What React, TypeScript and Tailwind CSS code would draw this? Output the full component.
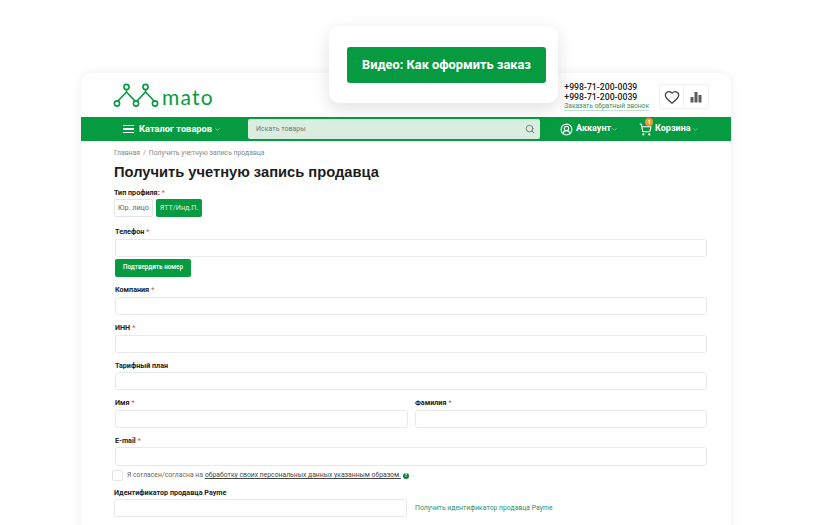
import { ChevronDown, Search, CircleUserRound, ShoppingCart, Heart } from 'lucide-react'

function Logo() {
  return (
    <svg width="46" height="26" viewBox="0 0 46 26" fill="none" stroke="#079b41" strokeWidth="1.6">
      <path d="M13.5 7 V10 L4 20 M13.5 10 L23 20 L32.5 10 L42 20 M32.5 7 V10" />
      <circle cx="13.5" cy="5" r="2.6" fill="#fff" />
      <circle cx="32.5" cy="5" r="2.6" fill="#fff" />
      <circle cx="4" cy="21.5" r="2.6" fill="#fff" />
      <circle cx="23" cy="21.5" r="2.6" fill="#fff" />
      <circle cx="42" cy="21.5" r="2.6" fill="#fff" />
    </svg>
  )
}

function Label({ text, req = true, className = '' }: { text: string; req?: boolean; className?: string }) {
  return (
    <div className={`h-[12px] text-[7.2px] leading-[14px] font-bold text-[#222] ${className}`}>
      {text}
      {req && <span className="ml-[2px] text-[#e0443e] font-normal">*</span>}
    </div>
  )
}

function Input({ className = '' }: { className?: string }) {
  return <div className={`h-[18px] rounded-[3px] border border-[#e8e8e8] bg-white ${className}`} />
}

export default function App() {
  return (
    <div className="relative h-[525px] w-[825px] overflow-hidden bg-white font-['Roboto',sans-serif] pt-[73px] pl-[81px]">
      {/* Video popup */}
      <div className="absolute left-[329px] top-[26px] z-10 flex h-[77px] w-[229px] items-start rounded-[10px] bg-white pl-[18px] pt-[21px] shadow-[0_6px_18px_rgba(0,0,0,0.12)]">
        <button className="h-[36px] w-[199px] rounded-[3px] bg-[#079b41] text-[12.8px] font-bold text-white">
          Видео: Как оформить заказ
        </button>
      </div>

      {/* Main card */}
      <div className="h-[500px] w-[650px] rounded-t-[12px] bg-white shadow-[0_0_10px_rgba(0,0,0,0.07)]">
        <div className="flex h-[44px] items-center pl-[32px] pr-[22px]">
          <div className="flex items-center gap-[3px]">
            <Logo />
            <span className="font-['Lato',sans-serif] mt-[2px] text-[21px] leading-none tracking-[1.2px] text-[#079b41]">mato</span>
          </div>
          <div className="ml-auto mt-[3px] flex items-center gap-[10px]">
            <div className="text-[8.7px] leading-[10px] font-medium text-[#222]">
              <div>+998-71-200-0039</div>
              <div>+998-71-200-0039</div>
              <div className="text-[6.65px] leading-[8px] font-normal text-[#2f8f6a] border-b border-[#bfe3cf]">Заказать обратный звонок</div>
            </div>
            <div className="flex h-[25px] w-[50px] rounded-[2px] border border-[#f0f0f0]">
              <div className="flex w-[24px] items-center justify-center border-r border-[#f0f0f0]">
                <Heart size={16} className="text-[#444]" />
              </div>
              <div className="flex flex-1 items-center justify-center">
                <svg width="12" height="12" viewBox="0 0 12 12" fill="#5c5c5c">
                  <rect x="0.5" y="6" width="3" height="5.5" />
                  <rect x="4.5" y="1" width="3" height="10.5" />
                  <rect x="8.5" y="4" width="3" height="7.5" />
                </svg>
              </div>
            </div>
          </div>
        </div>

        {/* Green nav */}
        <div className="flex h-[24px] items-center bg-[#079b41] text-white">
          <div className="ml-[42px] flex items-center text-[9.3px] font-bold">
            <span className="mr-[5px] flex w-[11px] flex-col gap-[2px]">
              <span className="h-[1.5px] bg-white" />
              <span className="h-[1.5px] bg-white" />
              <span className="h-[1.5px] bg-white" />
            </span>
            Каталог товаров
            <ChevronDown size={7} className="ml-[2px] opacity-80" />
          </div>
          <div className="ml-[27px] flex h-[20px] w-[292px] items-center rounded-[2px] bg-[#d9eee1] pl-[8px] pr-[5px]">
            <span className="text-[7px] text-[#777]">Искать товары</span>
            <Search size={10} className="ml-auto text-[#666]" />
          </div>
          <div className="ml-[20px] flex items-center text-[9px] font-bold">
            <CircleUserRound size={13} className="mr-[3px]" />
            Аккаунт
            <ChevronDown size={7} className="opacity-70" />
          </div>
          <div className="relative ml-[21px] flex items-center text-[9px] font-bold">
            <ShoppingCart size={13} className="mr-[3px]" />
            <span className="absolute left-[6px] top-[-4px] flex h-[8px] w-[8px] items-center justify-center rounded-full bg-[#f39a2b] text-[5px]">1</span>
            Корзина
            <ChevronDown size={7} className="ml-[1px] opacity-70" />
          </div>
        </div>

        {/* Form */}
        <div className="pl-[33px] pr-[24px]">
          <div className="mt-[7px] flex gap-[3px] text-[6.85px] leading-[9px] text-[#888] translate-y-[1px]">
            <span>Главная</span><span>/</span><span>Получить учетную запись продавца</span>
          </div>
          <h1 className="mt-[5px] text-[14.7px] leading-[20px] font-bold text-[#1c1c1c] font-['Liberation_Sans',sans-serif]">
            Получить учетную запись продавца
          </h1>
          <Label text="Тип профиля:" className="mt-[4px]" />
          <div className="mt-[1px] flex gap-[3px] text-[7.2px]">
            <div className="flex h-[18px] w-[39px] items-center justify-center rounded-[2px] border border-[#e5e5e5] text-[#666]">Юр. лицо</div>
            <div className="flex h-[18px] w-[46px] items-center justify-center rounded-[2px] bg-[#079b41] text-[#d9f2e2]">ЯТТ/Инд.П.</div>
          </div>

          <div className="pl-[1px]">
            <Label text="Телефон" className="mt-[8px]" />
            <Input className="mt-[2px]" />
            <button className="mt-[2px] block h-[18px] w-[76px] rounded-[2px] bg-[#079b41] text-[6.3px] font-bold text-[#e6f6ec]">
              Подтвердить номер
            </button>
            <Label text="Компания" className="mt-[6px]" />
            <Input className="mt-[2px]" />
            <Label text="ИНН" className="mt-[6px]" />
            <Input className="mt-[2px]" />
            <Label text="Тарифный план" req={false} className="mt-[6px]" />
            <Input className="mt-[1px]" />
            <div className="mt-[6px] flex gap-[7px]">
              <div className="w-[293px]">
                <Label text="Имя" />
                <Input className="mt-[2px]" />
              </div>
              <div className="flex-1">
                <Label text="Фамилия" />
                <Input className="mt-[2px]" />
              </div>
            </div>
            <Label text="E-mail" className="mt-[6px]" />
            <Input className="mt-[1px] !h-[19px]" />
          </div>

          <div className="-ml-[2px] mt-[4px] flex h-[11px] items-center text-[6.8px] text-[#666]">
            <div className="mr-[4px] h-[11px] w-[11px] rounded-[2px] border border-[#e5e5e5]" />
            <span>Я согласен/согласна на</span>
            <span className="ml-[2px] underline text-[#444]">обработку своих персональных данных указанным образом.</span>
            <span className="ml-[2px] flex h-[6px] w-[6px] items-center justify-center rounded-full bg-[#0b7f4a] text-[5px] font-bold text-white">?</span>
          </div>

          <Label text="Идентификатор продавца Payme" req={false} className="mt-[5px]" />
          <div className="mt-[1px] flex items-center gap-[8px]">
            <Input className="w-[293px]" />
            <span className="text-[6.85px] text-[#2f8f6a]">Получить идентификатор продавца Payme</span>
          </div>
        </div>
      </div>
    </div>
  )
}
